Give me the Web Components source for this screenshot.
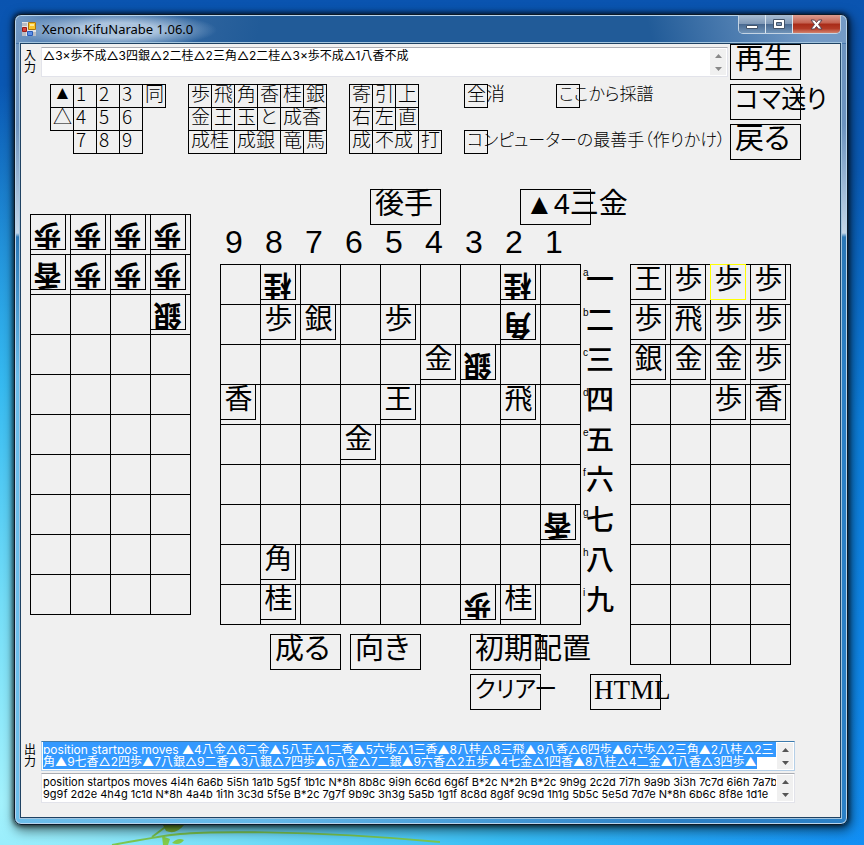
<!DOCTYPE html>
<html lang="ja">
<head>
<meta charset="utf-8">
<title>Xenon.KifuNarabe 1.06.0</title>
<style>
  html, body { height: 100%; margin: 0; }
  body { font-family: "Noto Sans CJK JP", sans-serif; color: #000; }
</style>
</head>
<body>
<kifu-desktop>
  <glass-window caption="Xenon.KifuNarabe 1.06.0">
    <kifu-app></kifu-app>
  </glass-window>
</kifu-desktop>

<script>
const define = (name, html, setup) => {
  const template = document.createElement('template');
  template.innerHTML = html;
  customElements.define(name, class extends HTMLElement {
    connectedCallback() {
      if (this.shadowRoot) return;
      this.attachShadow({ mode: 'open' }).append(template.content.cloneNode(true));
      if (setup) setup(this, this.shadowRoot);
    }
  });
};

/* Desktop wallpaper */
define('kifu-desktop', `
<style>
  :host {
    display: grid; grid-template: minmax(0, 1fr) / minmax(0, 1fr);
    min-height: 100%; box-sizing: border-box; padding: 14px 16px 20px 14px;
    position: relative; overflow: hidden;
    background:
      radial-gradient(ellipse 100% 85% at 0% 95%, #a4f2fd 0%, #74def8 28%, rgba(62,198,246,.85) 58%, rgba(20,140,240,0) 100%),
      linear-gradient(#0a54b0 0%, #0a5cb8 20%, #0d7fdc 50%, #118ef4 100%);
  }
  svg { position: absolute; left: 0; bottom: 0; width: 440px; height: 60px; }
  slot { display: contents; }
  ::slotted(*) { position: relative; }
</style>
<svg viewBox="0 0 440 60" aria-hidden="true" fill="none">
  <path d="M112 60C135 56 160 51 180 49S300 44 440 57" stroke="#7cc850" stroke-width="2"/>
  <path d="M152 52l16-12" stroke="#7cc850" stroke-width="2"/>
  <path d="M162 51l8 3-2 6h-5zM172 58q6-6 12-3-4 6-12 3z" fill="#82cc4a"/>
  <path d="M162 38q12-6 22 2-8 10-18 6z" fill="#7cb83c"/>
</svg>
<slot></slot>`);

/* Aero glass window frame */
define('glass-window', `
<style>
  :host {
    display: flex; flex-direction: column; padding: 0 6px 6px 5px;
    border: 1px solid #0c1a28; border-radius: 7px;
    box-shadow: inset 0 0 0 1px #b8d4ec, 0 0 5px 1px rgba(0,0,0,.75), 2px 4px 12px 2px rgba(0,0,0,.5);
    background:
      radial-gradient(ellipse 100px 18px at 102px 15px, rgba(200,218,236,.8) 0 40%, rgba(200,218,236,0)) top left / 240px 28px no-repeat,
      linear-gradient(105deg, rgba(130,165,205,.85) 0, rgba(90,130,180,.6) 60px, rgba(34,90,150,0) 240px) top / 100% 28px no-repeat,
      linear-gradient(75deg, rgba(34,90,150,0) 76%, rgba(130,165,205,.85) 95%) top / 100% 28px no-repeat,
      linear-gradient(#215b98 0, #215b98 28px, #6c93bf 29px, #6c93bf 110px, #c3d6e8 218px, #2a77b6 222px, rgba(42,119,182,0) 360px),
      linear-gradient(90deg, #6cbdea, #64b8e8 30%, #2b80c6 80%, #2b80c6);
  }
  header { display: flex; height: 28px; flex: none; }
  h1 {
    flex: 1; display: flex; align-items: center; gap: 6px; margin: 0; padding-left: 2px;
    font: 13px/28px "Noto Sans", sans-serif;
  }
  nav { display: flex; height: 18px; border: 1px solid #c4d4e4; border-top: 0; border-radius: 0 0 5px 5px; overflow: hidden; }
  nav button {
    width: 27px; margin: 0; padding: 0; border: 0; border-right: 1px solid #dbe6f0;
    display: flex; align-items: center; justify-content: center;
    background: linear-gradient(#a9bdd3 0, #8099b7 48%, #48688f 50%, #7093b8 100%);
  }
  nav .close { width: 47px; border: 0; background: linear-gradient(#dc9d90 0, #c4604f 45%, #a82b18 50%, #b33a26 75%, #d3826c 100%); }
  main { flex: 1; display: grid; border: 1px solid #1f4263; box-shadow: 0 0 0 1px #a3c5df; background: #f0f0f0; }
</style>
<header>
  <h1>
    <svg width="14" height="14" viewBox="0 0 14 14" aria-hidden="true">
      <path d="M0 0h14v14H0z" fill="#e4e4e4"/><path d="M0 1h5v3H0zM0 10h4v4H0zM11 10h3v4h-3z" fill="#b8bcc4"/>
      <path d="M6.500 .500h7v7h-7z" fill="#f9c62c" stroke="#a87510"/><path d="M8 2h4v2H8z" fill="#fdea9c"/>
      <path d="M.500 5.500h4v4h-4z" fill="#d8403a" stroke="#981c18"/>
      <path d="M5.500 9.500h5v4h-5z" fill="#5b8fe8" stroke="#2a5cb8"/>
    </svg>
    <span></span>
  </h1>
  <nav>
    <button aria-label="最小化"><svg width="12" height="14" viewBox="0 0 12 14"><path d="M.500 8.500h11v3H.500z" fill="#fff" stroke="#44546a"/></svg></button>
    <button aria-label="最大化"><svg width="12" height="10" viewBox="0 0 12 10"><path d="M.500 .500h11v9H.500z" fill="#fff" stroke="#44546a"/><path d="M3.500 3.500h5v3h-5z" fill="#7c97b8" stroke="#44546a"/></svg></button>
    <button class="close" aria-label="閉じる"><svg width="13" height="11" viewBox="0 0 13 11"><path d="M1 1h3.500l2 2.500L8.500 1H12L8.500 5.500 12 10H8.500l-2-2.500-2 2.500H1l3.500-4.500z" fill="#fff" stroke="#5a4450"/></svg></button>
  </nav>
</header>
<main><slot></slot></main>`,
(host, root) => { root.querySelector('h1 span').textContent = host.getAttribute('caption'); });

/* Outlined button whose caption may run past its box */
define('kifu-button', `
<style>
  :host { display: block; width: 71px; height: 36px; font: 29px/28px "Liberation Sans", "Noto Sans CJK JP", sans-serif; }
  :host([kana]) { font-size: 25px; }
  :host([allkana]) { font-size: 23px; }
  :host([small]) { width: auto; height: 24px; margin-right: -1px; font: 300 19px/16px "Noto Sans CJK JP", sans-serif; }
  :host([small][short]) { width: 24px; }
  :host([small][long]) { width: 24px; font-size: 17px; }
  :host([small][mark]) { font-family: "Liberation Sans", "Noto Sans CJK JP", sans-serif; }
  :host([serif]) { font-family: "Liberation Serif", serif; font-size: 27px; }
  button {
    display: block; box-sizing: border-box; width: 100%; height: 100%; margin: 0;
    padding: 0 0 6px 4px; border: 1px solid #000; background: none; color: #000;
    font: inherit; text-align: left; white-space: nowrap; font-feature-settings: "palt";
  }
  :host([small]) button { padding: 0 0 6px 2px; }
  :host([serif]) button { padding: 0 0 4px 3px; }
</style>
<button><slot></slot></button>`);

/* Scrolling text field with a label on its left */
define('kifu-field', `
<style>
  :host { display: flex; gap: 5px; }
  label { width: 12px; height: 30px; font-size: 12px; line-height: 12px; padding-top: 2px; box-sizing: border-box; word-break: break-all; }
  .box { flex: 1; min-width: 0; display: flex; box-sizing: border-box; height: 30px; border: 1px solid #e2e3ea; border-top-color: #abadb3; background: #fff; }
  :host([selected]) .box { border-color: #b5cfe7; border-top-color: #3d7bad; }
  textarea {
    flex: 1; min-width: 0; height: 28px; box-sizing: border-box; margin: 0; padding: 2px 0 0 1px; border: 0; outline: 0; resize: none;
    overflow: hidden; white-space: pre; background: none; color: #000;
    font: 12px/12px Inter, "Noto Sans CJK JP", sans-serif;
  }
  :host([latin]) textarea { font-size: 11px; }
  textarea::selection { background: #3399ff; color: #fff; }
  .bar { width: 16px; margin: 1px; display: flex; flex-direction: column; background: #f0f0f0; }
  .bar button { flex: 1; display: grid; place-items: center; margin: 0; padding: 0; border: 0; background: none; color: #555; }
  :host([idle]) .bar button { color: #888; }
</style>
<label for="text"></label>
<div class="box">
  <textarea id="text" spellcheck="false"></textarea>
  <div class="bar">
    <button aria-label="上へ"><svg width="7" height="4" viewBox="0 0 7 4"><path d="M0 4l3.500-4L7 4z" fill="currentColor"/></svg></button>
    <button aria-label="下へ"><svg width="7" height="4" viewBox="0 0 7 4"><path d="M0 0l3.500 4L7 0z" fill="currentColor"/></svg></button>
  </div>
</div>`,
(host, root) => {
  const area = root.querySelector('textarea');
  root.querySelector('label').textContent = host.getAttribute('label') || '';
  if (!host.getAttribute('label')) area.setAttribute('aria-label', '出力 (USI)');
  area.value = host.textContent.trim();
  if (host.hasAttribute('selected')) { area.focus({ preventScroll: true }); area.select(); }
});

/* Key grid: each key is "column:caption" */
define('kifu-keypad', `
<style>
  :host { display: grid; grid-template-columns: repeat(29, 23px); grid-template-rows: repeat(3, 23px); }
</style>`,
(host, root) => {
  const rows = [
    ['1:▲', '2:1', '3:2', '4:3', '5:同', '7:歩', '8:飛', '9:角', '10:香', '11:桂', '12:銀', '14:寄', '15:引', '16:上', '19:全消', '23:ここから採譜'],
    ['1:△', '2:4', '3:5', '4:6', '7:金', '8:王', '9:玉', '10:と', '11:成香', '14:右', '15:左', '16:直'],
    ['2:7', '3:8', '4:9', '7:成桂', '9:成銀', '11:竜', '12:馬', '14:成', '15:不成', '17:打', '19:コンピューターの最善手（作りかけ）'],
  ];
  rows.forEach((row, y) => row.forEach(entry => {
    const [column, caption] = entry.split(':');
    const key = document.createElement('kifu-button');
    const command = column > 18;
    key.toggleAttribute('small', true);
    key.toggleAttribute('short', command && caption.length < 3);
    key.toggleAttribute('long', command && caption.length > 2);
    key.toggleAttribute('mark', caption === '▲');
    key.style.gridArea = `${y + 1} / ${column} / auto / span ${command ? 1 : caption.length}`;
    key.textContent = caption;
    root.append(key);
  }));
});

/* One shogi piece */
define('shogi-piece', `
<style>
  :host { display: block; width: 36px; height: 36px; margin: -1px 0 0 -1px; }
  button {
    display: block; box-sizing: border-box; width: 100%; height: 100%; margin: 0; padding: 0;
    border: 1px solid #000; background: none; color: #000; font: 28px/24px "Noto Sans CJK JP", sans-serif;
  }
  span { display: block; height: 34px; padding-left: 1px; }
  :host([gote]) span { transform: rotate(180deg); font-weight: 700; }
  :host([active]) { position: relative; }
  :host([active]) button { border-color: #ff0; }
</style>
<button><span><slot></slot></span></button>`);

/* Ruled grid of squares; "v" before a piece turns it, "*" marks it active */
define('shogi-grid', `
<style>
  :host { display: grid; width: max-content; border: solid #000; border-width: 1px 0 0 1px; }
  div { width: 39px; height: 39px; border: solid #000; border-width: 0 1px 1px 0; }
</style>`,
(host, root) => {
  const columns = Number(host.getAttribute('columns'));
  host.style.gridTemplateColumns = `repeat(${columns}, 40px)`;
  const rows = host.getAttribute('rows').split('/');
  for (const row of rows) {
    const cells = row ? row.split(',') : [];
    for (let x = 0; x < columns; x++) {
      const square = document.createElement('div');
      const code = cells[x];
      if (code) {
        const piece = document.createElement('shogi-piece');
        piece.toggleAttribute('gote', code[0] === 'v');
        piece.toggleAttribute('active', code[0] === '*');
        piece.textContent = code.slice(-1);
        square.append(piece);
      }
      root.append(square);
    }
  }
});

/* File digits along the top, or rank kanji down the side */
define('board-labels', `
<style>
  :host { display: grid; }
  :host([files]) {
    grid-template-columns: repeat(9, 40px); box-sizing: border-box; height: 39px; padding: 0 0 5px 5px;
    align-items: center; font: 32px/32px "Liberation Sans", sans-serif;
  }
  :host([ranks]) { grid-auto-rows: 40px; width: 49px; font-size: 28px; font-weight: 500; line-height: 28px; }
  div { display: flex; }
  small { width: 3px; font: 10px/10px "Liberation Sans", sans-serif; padding: 4px 0 0 2px; }
</style>`,
(host, root) => {
  const files = host.hasAttribute('files');
  [...(files ? '987654321' : '一二三四五六七八九')].forEach((text, i) => {
    const div = document.createElement('div');
    if (!files) {
      const small = document.createElement('small');
      small.textContent = 'abcdefghi'[i];
      div.append(small);
    }
    div.append(text);
    root.append(div);
  });
});

/* The whole form */
define('kifu-app', `
<style>
  :host { display: flex; flex-direction: column; }
  .top { display: flex; gap: 2px; padding-right: 39px; }
  .entry { flex: 1; min-width: 0; display: flex; flex-direction: column; gap: 7px; padding: 3px 0 0 3px; }
  kifu-keypad { margin-left: 26px; }
  .side { display: flex; flex-direction: column; gap: 4px; }
  .play { display: flex; align-items: flex-start; padding: 29px 0 0 9px; }
  .left { margin: 25px 29px 0 0; }
  .right { margin-top: 75px; }
  .status { display: flex; gap: 79px; padding-left: 150px; }
  .board { display: flex; }
  .actions { display: grid; grid-template-columns: 80px 120px 120px 80px; gap: 4px 0; padding: 9px 0 0 50px; width: 0; }
  .actions .clear { grid-column: 3; }
  .output { display: flex; flex-direction: column; gap: 2px; margin-top: auto; padding: 0 45px 14px 3px; }
</style>
<section class="top">
  <div class="entry">
    <kifu-field label="入力" idle>△3×歩不成△3四銀△2二桂△2三角△2二桂△3×歩不成△1八香不成</kifu-field>
    <kifu-keypad></kifu-keypad>
  </div>
  <div class="side">
    <kifu-button>再生</kifu-button>
    <kifu-button kana>コマ送り</kifu-button>
    <kifu-button>戻る</kifu-button>
  </div>
</section>
<section class="play">
  <shogi-grid class="left" columns="4" rows="v歩,v歩,v歩,v歩/v香,v歩,v歩,v歩/,,,v銀///////"></shogi-grid>
  <div>
    <div class="status"><kifu-button>後手</kifu-button><kifu-button>▲4三金</kifu-button></div>
    <board-labels files></board-labels>
    <div class="board">
      <shogi-grid columns="9" rows=",v桂,,,,,,v桂,/,歩,銀,,歩,,,v角,/,,,,,金,v銀,,/香,,,,王,,,飛,/,,,金,,,,,//,,,,,,,,v香/,角,,,,,,,/,桂,,,,,v歩,桂,"></shogi-grid>
      <board-labels ranks></board-labels>
    </div>
    <div class="actions">
      <kifu-button>成る</kifu-button><kifu-button>向き</kifu-button><kifu-button>初期配置</kifu-button>
      <kifu-button class="clear" allkana>クリアー</kifu-button><kifu-button serif>HTML</kifu-button>
    </div>
  </div>
  <shogi-grid class="right" columns="4" rows="王,歩,*歩,歩/歩,飛,歩,歩/銀,金,金,歩/,,歩,香//////"></shogi-grid>
</section>
<section class="output">
  <kifu-field label="出力" selected>position startpos moves ▲4八金△6二金▲5八王△1二香▲5六歩△1三香▲8八桂△8三飛▲9八香△6四歩▲6六歩△2三角▲2八桂△2三
角▲9七香△2四歩▲7八銀△9二香▲3八銀△7四歩▲6八金△7二銀▲9六香△2五歩▲4七金△1四香▲8八桂△4二金▲1八香△3四歩▲</kifu-field>
  <kifu-field latin>position startpos moves 4i4h 6a6b 5i5h 1a1b 5g5f 1b1c N*8h 8b8c 9i9h 6c6d 6g6f B*2c N*2h B*2c 9h9g 2c2d 7i7h 9a9b 3i3h 7c7d 6i6h 7a7b
9g9f 2d2e 4h4g 1c1d N*8h 4a4b 1i1h 3c3d 5f5e B*2c 7g7f 9b9c 3h3g 5a5b 1g1f 8c8d 8g8f 9c9d 1h1g 5b5c 5e5d 7d7e N*8h 6b6c 8f8e 1d1e</kifu-field>
</section>`);
</script>
</body>
</html>
